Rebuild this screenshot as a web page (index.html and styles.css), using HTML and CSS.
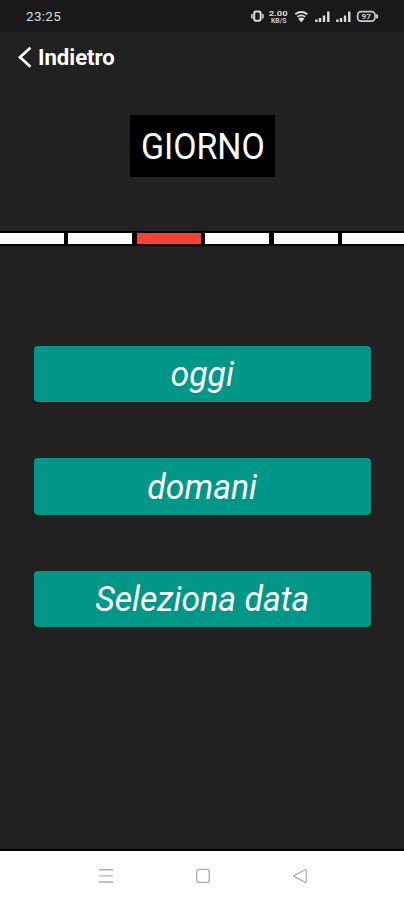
FILE: index.html
```html
<!DOCTYPE html>
<html lang="it">
<head>
<meta charset="utf-8">
<meta name="viewport" content="width=device-width, initial-scale=1">
<title>Giorno</title>
<link rel="stylesheet" href="styles.css">
</head>
<body>
<div class="screen">
  <header class="status">
    <span class="clock">23:25</span>
    <svg class="status-icons" width="132" height="20" viewBox="0 0 132 20" fill="none">
      <rect x="4.2" y="2.6" width="6.4" height="9.2" rx="1.8" stroke="#ddd" stroke-width="2"/>
      <path d="M1.9 5v4.4M12.9 5v4.4" stroke="#ccc" stroke-width="1.6"/>
      <text class="speed" x="18.7" y="7.4" textLength="19" lengthAdjust="spacingAndGlyphs">2.00</text>
      <text class="unit" x="21" y="14" textLength="15.5" lengthAdjust="spacingAndGlyphs">KB/S</text>
      <path d="M45.3 5.2q6-4.4 12 0M47.4 7.8q4-2.8 7.8 0" stroke="#ddd" stroke-width="1.9"/>
      <path d="M48.2 9.5q3.2-2 6.2 0l-3.1 3.9z" fill="#ddd"/>
      <path d="M66.4 10.5v2.5M70 9v4M74 6.5v6.5M78.3 2.5v10.5M87.4 10.5v2.5M91 9v4M95 6.5v6.5M99.3 2.5v10.5" stroke="#ddd" stroke-width="2.4"/>
      <rect x="107.6" y="2.7" width="17.4" height="9.4" rx="3.5" stroke="#ccc" stroke-width="1.7"/>
      <path d="M126.8 5.2q2 2 0 4.2z" fill="#ddd" stroke="#ddd"/>
      <text class="battery" x="111.6" y="10.3" textLength="9.5" lengthAdjust="spacingAndGlyphs">97</text>
    </svg>
  </header>
  <nav class="back">
    <svg width="16" height="24" viewBox="0 0 16 24" fill="none"><path d="M13.4 2.7 3 12.2l10.4 9.5" stroke="#fff" stroke-width="2.7"/></svg>
    <span class="back-label">Indietro</span>
  </nav>
  <h1 class="title"><span class="title-text">GIORNO</span></h1>
  <div class="steps">
    <i class="step"></i><i class="step"></i><i class="step current"></i><i class="step"></i><i class="step"></i><i class="step"></i>
  </div>
  <main class="choices">
    <button class="choice"><span class="label">oggi</span></button>
    <button class="choice"><span class="label">domani</span></button>
    <button class="choice"><span class="label">Seleziona data</span></button>
  </main>
  <footer class="system-nav">
    <svg width="16" height="16" viewBox="0 0 16 16" fill="none"><path d="M1 1.8h14M1 14h14" stroke="#aaa" stroke-width="1.5"/><path d="M1 7.8h14" stroke="#ccc" stroke-width="2"/></svg>
    <svg width="16" height="16" viewBox="0 0 16 16" fill="none"><rect x="1.7" y="1.4" width="12.6" height="13" rx="2.5" stroke="#aaa" stroke-width="1.3"/></svg>
    <svg width="16" height="16" viewBox="0 0 16 16" fill="none"><path d="M14.2 1.8v12.4Q14 14.8 13 14.3L2 8.4Q1.4 8 2 7.5L13 1.7Q14 1.2 14.2 1.8z" stroke="#aaa" stroke-width="1.2"/></svg>
  </footer>
</div>
</body>
</html>
```
FILE: styles.css
```css
* { box-sizing: border-box; }
body { margin: 0; background: #212121; font-family: Roboto, sans-serif; color: #fff; }
.screen { display: flex; flex-direction: column; height: 900px; overflow: hidden; }
.status { display: flex; justify-content: space-between; height: 32px; padding: 9px 22px 0 26px; background: #191919; }
.clock { font-size: 13.5px; line-height: 15px; letter-spacing: .3px; color: #ddd; }
.speed { font: 700 8px Roboto, sans-serif; fill: #ddd; }
.unit { font: 700 7px Roboto, sans-serif; fill: #ccc; }
.battery { font: 700 8px Roboto, sans-serif; fill: #ccc; }
.back { display: flex; align-items: center; gap: 5px; height: 50px; padding-left: 17px; }
.back-label { padding-top: 2px; font-size: 22px; font-weight: 700; line-height: 26px; transform: scaleX(1.005); transform-origin: left; }
.title { display: flex; align-items: center; justify-content: center; align-self: center; width: 145px; height: 62px; margin: 33px 0 0 1px; padding-top: 1px; background: #000; font-weight: 400; font-size: 36px; }
.title-text { transform: scaleX(.94); }
.steps { display: grid; grid-template-columns: 64px 64px 64px 64px 64px 1fr; gap: 4.4px; margin-top: 54px; padding: 2px 0; height: 15px; background: #000; }
.step { background: #fff; }
.current { background: #f44336; }
.choices { display: flex; flex-direction: column; gap: 56px; padding: 99.5px 33px 0 34px; flex: 1; }
.choice { display: flex; align-items: center; justify-content: center; height: 56.5px; padding: 2px 0 0; border: 0; border-radius: 4px; background: #009688; color: #fff; font: italic 400 35px Roboto, sans-serif; box-shadow: 0 1px 2px #151515; }
.label { transform: translateX(-.7px) scaleX(.965); }
.system-nav { display: flex; justify-content: center; gap: 81px; height: 51px; padding: 17px 0 0 1px; background: #fff; border-top: 2px solid #000; }
```
